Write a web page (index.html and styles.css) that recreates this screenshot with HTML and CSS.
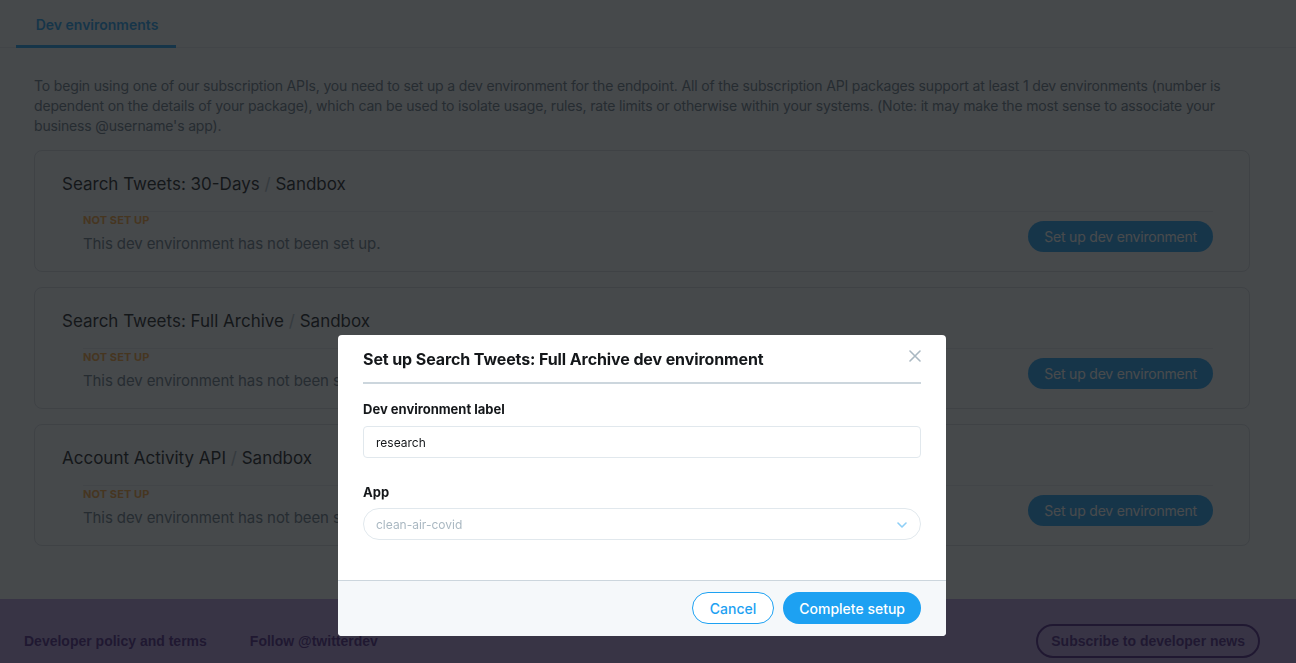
FILE: index.html
```html
<!DOCTYPE html>
<html lang="en">
<head>
<meta charset="utf-8">
<title>Dev environments</title>
<link rel="stylesheet" href="styles.css">
</head>
<body>
<div class="page">
  <nav class="tabs">
    <a class="tab tab-active">Dev environments</a>
  </nav>
  <main class="content">
    <p class="intro">To begin using one of our subscription APIs, you need to set up a dev environment for the endpoint. All of the subscription API packages support at least 1 dev environments (number is dependent on the details of your package), which can be used to isolate usage, rules, rate limits or otherwise within your systems. (Note: it may make the most sense to associate your business @username's app).</p>

    <section class="card">
      <h2 class="card-title">Search Tweets: 30-Days <span class="slash">/</span> Sandbox</h2>
      <div class="card-row">
        <div class="status">
          <div class="status-label">NOT SET UP</div>
          <div class="status-text">This dev environment has not been set up.</div>
        </div>
        <button class="btn-primary">Set up dev environment</button>
      </div>
    </section>

    <section class="card">
      <h2 class="card-title">Search Tweets: Full Archive <span class="slash">/</span> Sandbox</h2>
      <div class="card-row">
        <div class="status">
          <div class="status-label">NOT SET UP</div>
          <div class="status-text">This dev environment has not been set up.</div>
        </div>
        <button class="btn-primary">Set up dev environment</button>
      </div>
    </section>

    <section class="card">
      <h2 class="card-title">Account Activity API <span class="slash">/</span> Sandbox</h2>
      <div class="card-row">
        <div class="status">
          <div class="status-label">NOT SET UP</div>
          <div class="status-text">This dev environment has not been set up.</div>
        </div>
        <button class="btn-primary">Set up dev environment</button>
      </div>
    </section>
  </main>
  <footer class="site-footer">
    <div class="footer-links">
      <a class="footer-link">Developer policy and terms</a>
      <a class="footer-link">Follow @twitterdev</a>
    </div>
    <a class="footer-btn">Subscribe to developer news</a>
  </footer>
</div>

<div class="overlay">
  <div class="modal">
    <div class="modal-header">
      <h3 class="modal-title">Set up Search Tweets: Full Archive dev environment</h3>
      <button class="modal-close" aria-label="Close">
        <svg width="12" height="12" viewBox="0 0 12 12"><path d="M1 1L11 11M11 1L1 11" stroke="#aab8c2" stroke-width="1.6" stroke-linecap="round"/></svg>
      </button>
    </div>
    <div class="modal-body">
      <label class="field-label">Dev environment label</label>
      <div class="text-input">research</div>
      <label class="field-label field-label-gap">App</label>
      <div class="select-input">
        <span class="placeholder">clean-air-covid</span>
        <svg class="chevron" width="10" height="6" viewBox="0 0 10 6"><path d="M1 1L5 5L9 1" fill="none" stroke="#8ecff7" stroke-width="1.6" stroke-linecap="round" stroke-linejoin="round"/></svg>
      </div>
    </div>
    <div class="modal-footer">
      <button class="btn-outline">Cancel</button>
      <button class="btn-solid">Complete setup</button>
    </div>
  </div>
</div>
</body>
</html>
```

FILE: styles.css
```css
* { box-sizing: border-box; }

html, body {
  margin: 0;
  padding: 0;
  height: 100%;
  overflow: hidden;
}

body {
  background: #f5f8fa;
  font-family: Inter, "Noto Sans", "DejaVu Sans", sans-serif;
  color: #14171a;
}

.page {
  min-height: 100%;
}

.tabs {
  display: flex;
  padding: 0 20px 0 16px;
  border-bottom: 1px solid #e1e8ed;
}

.tab {
  display: block;
  width: 160px;
  height: 48px;
  line-height: 50px;
  text-align: center;
  font-size: 14px;
  font-weight: 600;
  color: #1da1f2;
  border-bottom: 3px solid #1da1f2;
  margin-bottom: -1px;
  padding-left: 2px;
}

.content {
  padding: 28px 46px 53px 34px;
}

.intro {
  margin: 0 0 14px;
  font-size: 14px;
  line-height: 20px;
  letter-spacing: -0.16px;
  color: #657786;
}

.card {
  border: 1px solid #d4dbe0;
  border-radius: 8px;
  padding: 21px 36px 17px 27px;
  margin-bottom: 15px;
}

.card:last-child { margin-bottom: 0; }

.card-title {
  margin: 0 0 15px;
  font-size: 17px;
  line-height: 24px;
  font-weight: 400;
  color: #14171a;
}

.slash { color: #aab8c2; }

.card-row {
  margin-left: 21px;
  border-top: 1px solid #e1e8ed;
  padding-top: 1px;
  display: flex;
  align-items: center;
  justify-content: space-between;
}

.status-label {
  font-size: 11px;
  line-height: 14px;
  font-weight: 700;
  color: #f7a23a;
  letter-spacing: 0.1px;
}

.status-text {
  margin-top: 7px;
  font-size: 15px;
  line-height: 20px;
  letter-spacing: -0.1px;
  color: #657786;
}

.btn-primary {
  border: 0;
  height: 31px;
  padding: 0 16px;
  border-radius: 16px;
  background: #1da1f2;
  color: #ffffff;
  font-family: inherit;
  font-size: 14px;
  font-weight: 400;
  letter-spacing: -0.2px;
  margin-top: 5px;
}

.site-footer {
  background: #b59ce0;
  padding: 25px 36px 30px 24px;
  display: flex;
  align-items: center;
  justify-content: space-between;
  font-family: "Liberation Sans", Arial, sans-serif;
}

.footer-links {
  display: flex;
  gap: 43px;
}

.footer-link {
  font-size: 14px;
  font-weight: 700;
  color: #4a1c86;
}

.footer-btn {
  display: block;
  height: 34px;
  line-height: 30px;
  padding: 0 13px;
  border: 2px solid #4a1c86;
  border-radius: 17px;
  font-size: 14px;
  font-weight: 700;
  color: #4a1c86;
}

.overlay {
  position: fixed;
  inset: 0;
  background: rgba(20, 23, 26, 0.78);
}

.modal {
  position: absolute;
  left: 338px;
  top: 335px;
  width: 608px;
  background: #ffffff;
  border-radius: 4px;
  overflow: hidden;
}

.modal-header {
  position: relative;
  margin: 0 25px;
  padding: 14px 0 13px;
  border-bottom: 2px solid #ccd6dd;
}

.modal-title {
  margin: 0;
  font-size: 16px;
  line-height: 20px;
  font-weight: 700;
  letter-spacing: -0.1px;
  color: #14171a;
}

.modal-close {
  position: absolute;
  top: 15px;
  right: 0;
  border: 0;
  padding: 0;
  background: none;
  width: 12px;
  height: 12px;
  display: flex;
}

.modal-body {
  padding: 17px 25px 40px;
  display: flex;
  flex-direction: column;
}

.field-label {
  font-size: 13px;
  line-height: 16px;
  font-weight: 700;
  color: #14171a;
  margin-bottom: 9px;
}

.field-label-gap {
  margin-top: 26px;
  margin-bottom: 8px;
}

.text-input {
  height: 32px;
  border: 1px solid #e1e8ed;
  border-radius: 4px;
  padding: 0 12px;
  display: flex;
  align-items: center;
  font-size: 12px;
  color: #14171a;
}

.select-input {
  height: 32px;
  border: 1px solid #e1e8ed;
  border-radius: 16px;
  padding: 0 13px 0 12px;
  display: flex;
  align-items: center;
  justify-content: space-between;
  font-size: 12px;
}

.placeholder { color: #aab8c2; }

.chevron { margin-top: 2px; }

.modal-footer {
  background: #f5f8fa;
  border-top: 1px solid #ccd6dd;
  padding: 11px 25px 12px;
  display: flex;
  justify-content: flex-end;
  gap: 9px;
}

.btn-outline,
.btn-solid {
  height: 32px;
  border-radius: 16px;
  font-family: inherit;
  font-size: 14px;
  font-weight: 500;
  padding: 0 16px;
}

.btn-outline {
  background: #ffffff;
  border: 1px solid #1da1f2;
  color: #1da1f2;
  padding: 0 17px;
}

.btn-solid {
  background: #1da1f2;
  border: 0;
  color: #ffffff;
}
```
